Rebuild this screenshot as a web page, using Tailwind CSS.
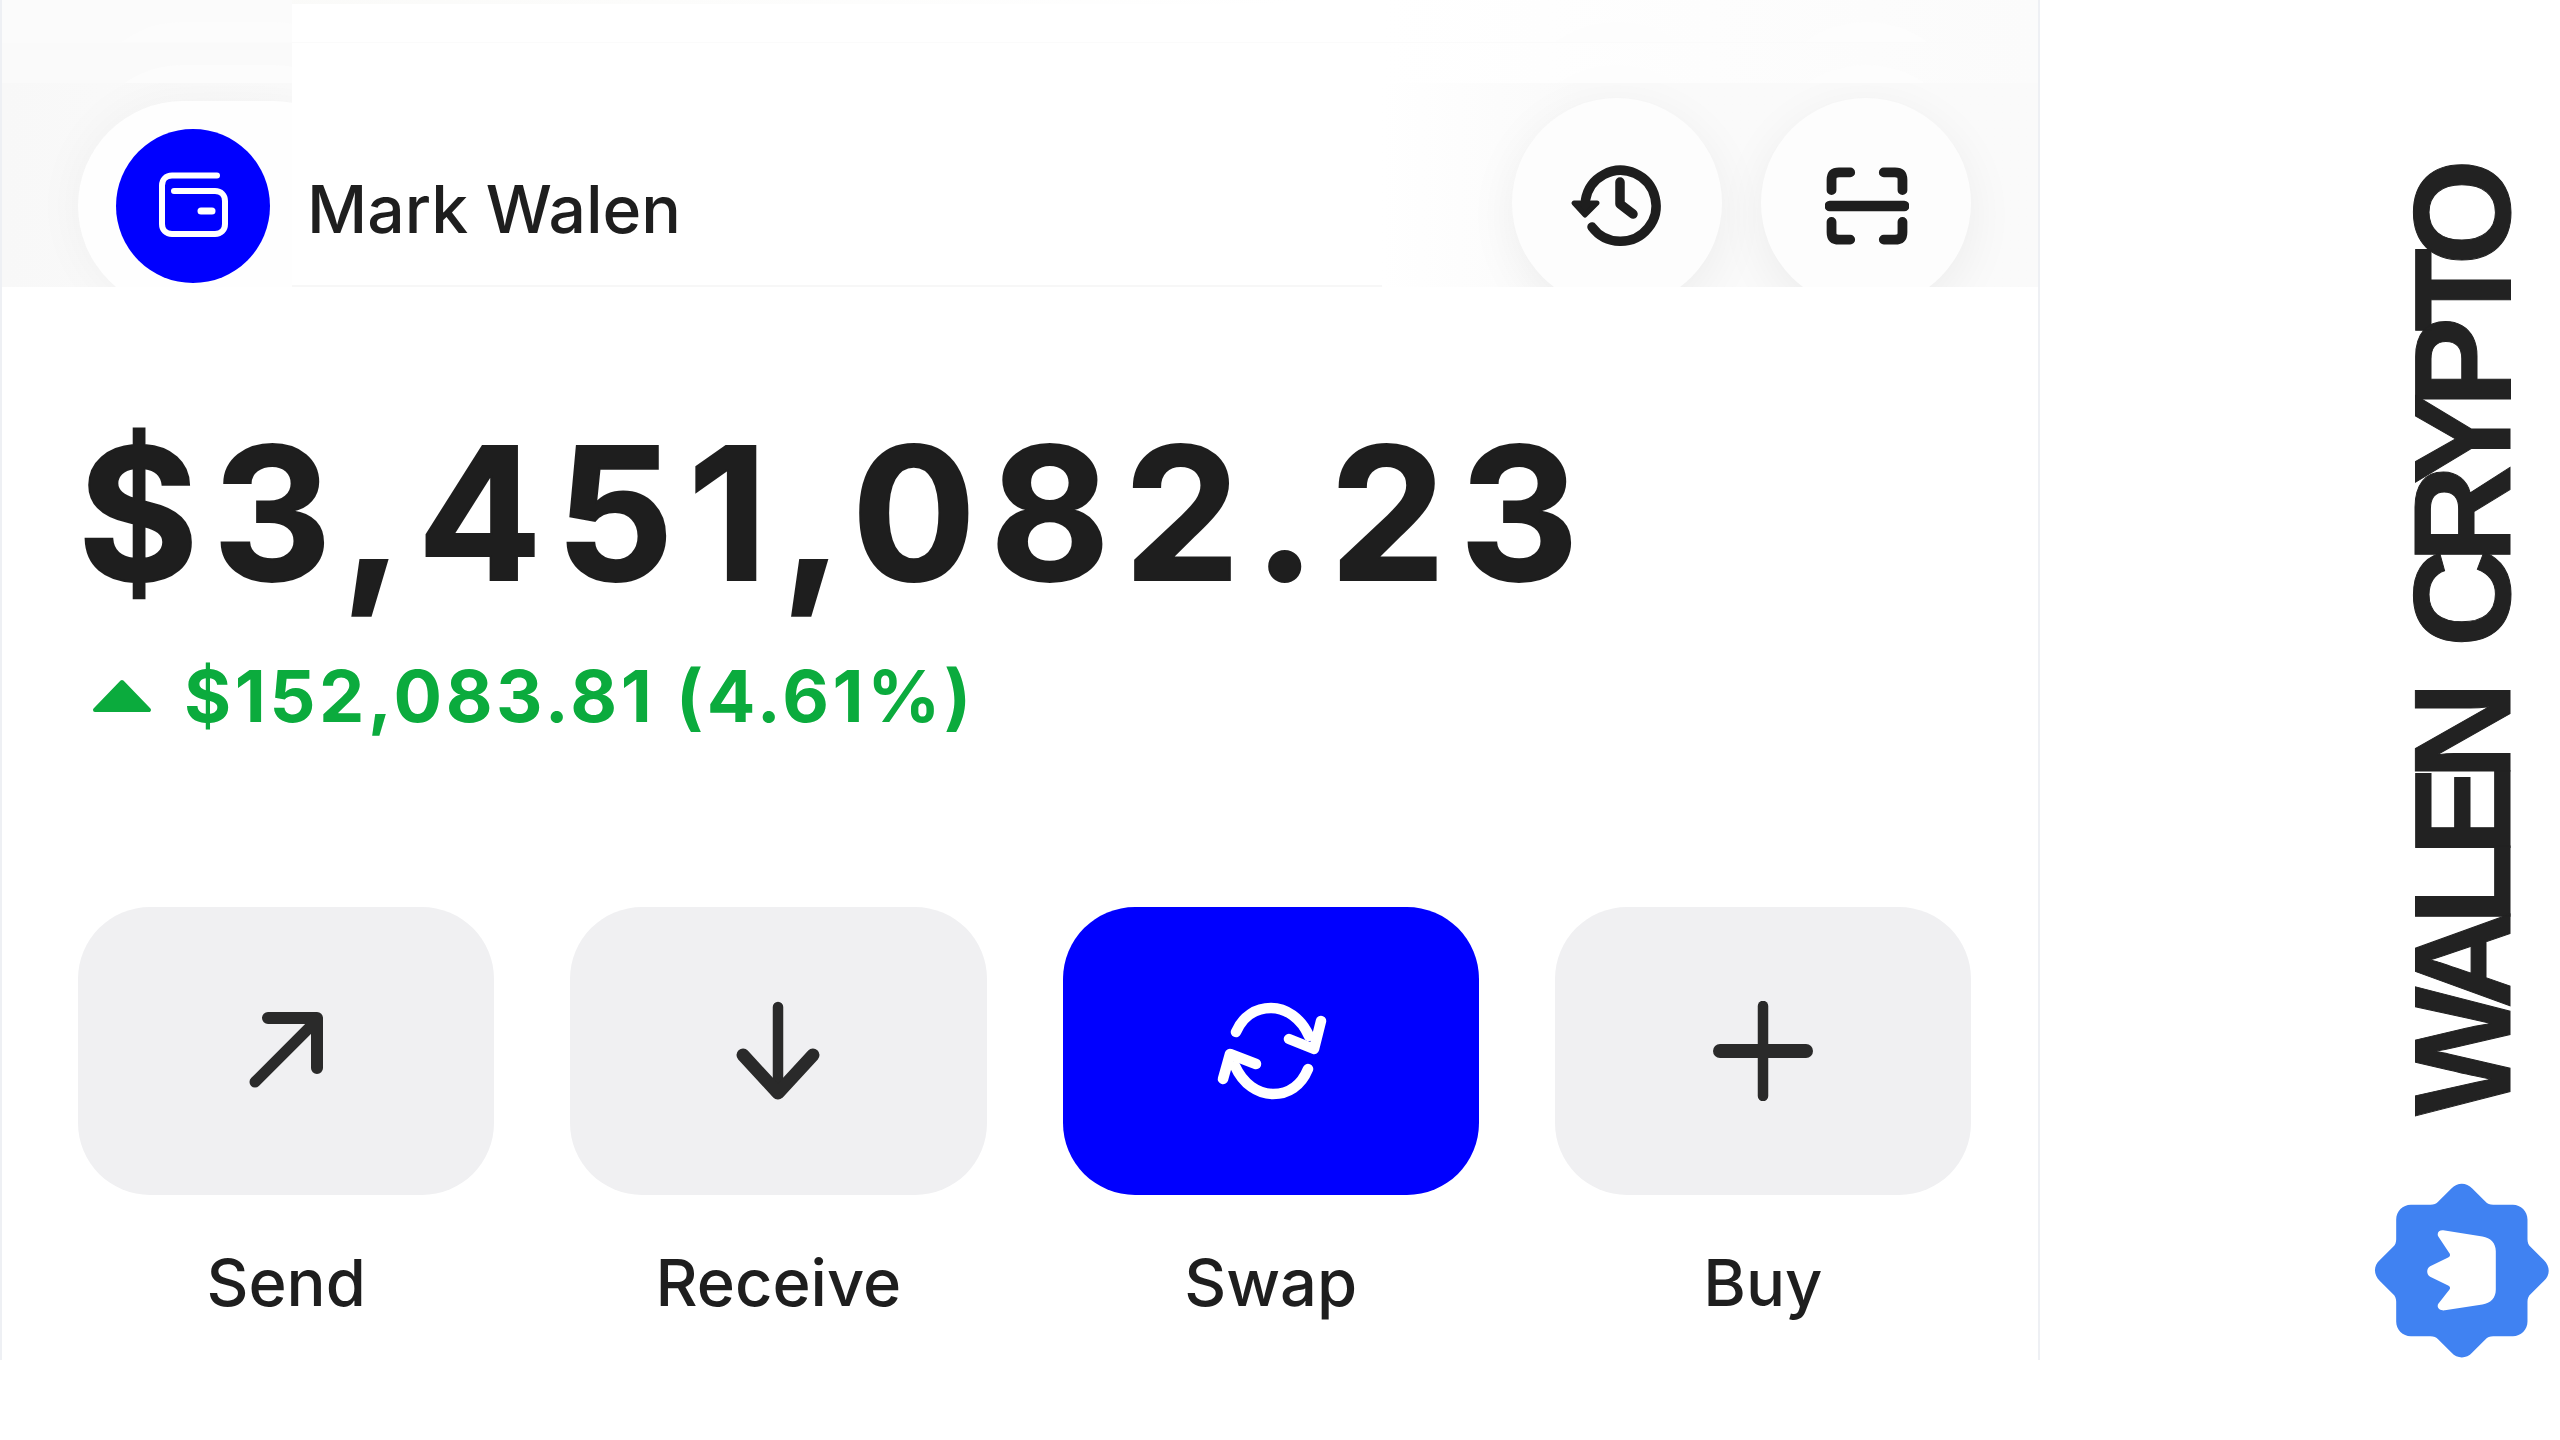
<!doctype html>
<html lang="en">
<head>
<meta charset="utf-8">
<title>Wallet</title>
<script src="https://cdn.jsdelivr.net/npm/@tailwindcss/browser@4"></script>
</head>
<body class="bg-white font-['Inter',sans-serif] text-[#1e1e1e]">
<div class="flex w-[2560px] h-[1440px] overflow-hidden">

  <!-- Wallet card -->
  <main class="w-[2040px] h-[1360px] shrink-0 border-x-2 border-[#eef0f4] bg-white">

    <!-- Top bar with layered frosted strips behind it -->
    <header class="relative h-[287px] border-b-2 border-[#f7f7f7]">
      <div class="absolute inset-0">
        <div class="relative h-[43px] overflow-hidden border-b border-[#fbfbfb]">
          <div class="absolute left-0 top-0 w-[1300px] h-[4px] bg-gradient-to-r from-[#f9f9f7] to-white"></div>
          <div class="absolute left-0 top-0 w-[290px] h-full overflow-hidden bg-[#fbfbfb]"><div class="absolute left-[76px] top-[22px] w-[300px] h-[210px] rounded-full bg-[#fcfcfc]"></div></div>
          <div class="absolute left-[1380px] right-0 top-0 h-full bg-gradient-to-r from-white to-[#fbfbfb]"></div>
          <div class="absolute left-[1510px] top-[22px] size-[210px] rounded-full bg-[#fdfdfd]"></div>
          <div class="absolute left-[1759px] top-[22px] size-[210px] rounded-full bg-[#fdfdfd]"></div>
        </div>
        <div class="relative h-[40px] overflow-hidden">
          <div class="absolute left-0 top-0 w-[290px] h-full overflow-hidden bg-[#fafafa]"><div class="absolute left-[76px] top-[22px] w-[300px] h-[210px] rounded-full bg-[#fcfcfc]"></div></div>
          <div class="absolute left-[1380px] right-0 top-0 h-full bg-gradient-to-r from-white to-[#fbfbfb]"></div>
          <div class="absolute left-[1510px] top-[22px] size-[210px] rounded-full bg-[#fdfdfd]"></div>
          <div class="absolute left-[1759px] top-[22px] size-[210px] rounded-full bg-[#fdfdfd]"></div>
        </div>
        <div class="relative h-[204px] overflow-hidden">
          <div class="absolute left-0 top-0 w-[290px] h-full overflow-hidden bg-gradient-to-r from-[#f8f8f8] to-[#fbfbfb]"><div class="absolute left-[76px] top-[18px] w-[300px] h-[210px] rounded-full bg-[#fefefe] shadow-[0_0_50px_rgba(0,0,0,0.045)]"></div></div>
          <div class="absolute left-[1380px] right-0 top-0 h-full overflow-hidden bg-gradient-to-r from-white via-[#fafafa] via-30% to-[#fafafa]">
            <div class="absolute left-[130px] top-[15px] size-[210px] rounded-full bg-[#fdfdfd] shadow-[0_12px_50px_rgba(0,0,0,0.06)]"></div>
            <div class="absolute left-[379px] top-[15px] size-[210px] rounded-full bg-[#fdfdfd] shadow-[0_12px_50px_rgba(0,0,0,0.06)]"></div>
          </div>
        </div>
      </div>

      <div class="relative flex items-start justify-between pt-[129px] pl-[114px] pr-[66px]">
        <div class="flex items-center gap-[37px]">
          <div class="size-[154px] rounded-full bg-[#0000ff] flex items-center justify-center">
            <svg class="w-[90px] h-[90px] translate-x-[2px] -translate-y-[1px]" viewBox="0 0 90 90" fill="none" stroke="white" stroke-width="6" stroke-linecap="round" stroke-linejoin="round">
              <path d="M67 15.5H22c-6 0-10 4-10 10V64c0 6 4 10 10 10h43c6 0 10-4 10-10V41c0-6-4-10-10-10H24"/>
              <path d="M51 51h11" stroke-width="7"/>
            </svg>
          </div>
          <span class="text-[66px] font-medium leading-none translate-y-[3px]">Mark Walen</span>
        </div>
        <div class="flex gap-[39px] -mt-[28px]">
          <div class="size-[210px] flex items-center justify-center">
            <svg class="w-[120px] h-[110px] translate-x-[1px] -translate-y-[3px]" viewBox="0 0 120 110" fill="none" stroke="#1e1e1e" stroke-width="9.5" stroke-linecap="round" stroke-linejoin="round">
              <path d="M33 79A35.5 35.5 0 1 0 26.5 52"/>
              <path d="M15 55h23L26 67z" fill="#1e1e1e" stroke-width="5"/>
              <path d="M61 34v22l13 10"/>
            </svg>
          </div>
          <div class="size-[210px] flex items-center justify-center">
            <svg class="size-[84px]" viewBox="0 0 90 90" fill="none" stroke="#1e1e1e" stroke-width="10.5" stroke-linecap="round" stroke-linejoin="round">
              <path d="M27 9H15c-6 0-8 3-8 8v11M63 9h12c6 0 8 3 8 8v11M27 81H15c-6 0-8-3-8-8V62M63 81h12c6 0 8-3 8-8V62"/>
              <path d="M5 45h80" stroke-width="11"/>
            </svg>
          </div>
        </div>
      </div>
    </header>

    <!-- Balance -->
    <section class="pl-[76px] font-bold">
      <h1 class="mt-[127px] text-[184px] leading-[198px] tracking-[14.2px] [-webkit-text-stroke:2px_#1e1e1e] whitespace-nowrap">$3,451,082.23</h1>
      <div class="mt-[39px] flex items-center gap-[32px] pl-[14px] text-[#0bab3d]">
        <svg class="w-[60px] h-[34px]" viewBox="0 0 60 34" fill="#0bab3d" stroke="#0bab3d" stroke-width="4" stroke-linejoin="round"><path d="M30 3 57 31H3z"/></svg>
        <span class="text-[72px] leading-[90px] tracking-[3.6px] whitespace-nowrap">$152,083.81 (4.61%)</span>
      </div>
    </section>

    <!-- Quick actions -->
    <section class="mt-[166px] ml-[76px] mr-[67px] grid grid-cols-4 gap-x-[76px] text-center">
      <div>
        <div class="h-[288px] rounded-[72px] bg-[#f0f0f2] flex items-center justify-center">
          <svg class="size-[100px] translate-x-[3px]" viewBox="0 0 100 100" fill="none" stroke="#2a2a2a" stroke-width="11" stroke-linecap="round" stroke-linejoin="round"><path d="M16 81 76 21"/><path d="M29 17h49v50" stroke-width="12"/></svg>
        </div>
        <div class="mt-[48px] text-[65px] font-medium leading-[80px]">Send</div>
      </div>
      <div>
        <div class="h-[288px] rounded-[72px] bg-[#f0f0f2] flex items-center justify-center">
          <svg class="size-[100px]" viewBox="0 0 100 100" fill="none" stroke="#2a2a2a" stroke-width="10.5" stroke-linecap="round" stroke-linejoin="round"><path d="M50 6v86"/><path d="M15 54l35 38 35-38" stroke-width="13"/></svg>
        </div>
        <div class="mt-[48px] text-[65px] font-medium leading-[80px]">Receive</div>
      </div>
      <div>
        <div class="h-[288px] rounded-[72px] bg-[#0000ff] flex items-center justify-center">
          <svg class="w-[140px] h-[120px]" viewBox="0 0 140 120" fill="none" stroke="white" stroke-width="10.5" stroke-linecap="round" stroke-linejoin="round">
            <path d="M35 41C42 25 55 17 70 17c15 0 30 10 38 28"/><path d="M120 30 113 58 88 48"/>
            <path d="M107 78c-7 17-20 25-35 25-15 0-30-10-38-28"/><path d="M22 88 29 63 55 73"/>
          </svg>
        </div>
        <div class="mt-[48px] text-[65px] font-medium leading-[80px]">Swap</div>
      </div>
      <div>
        <div class="h-[288px] rounded-[72px] bg-[#f0f0f2] flex items-center justify-center">
          <svg class="size-[100px]" viewBox="0 0 100 100" fill="none" stroke="#2a2a2a" stroke-linecap="round"><path d="M50 5v90" stroke-width="10.5"/><path d="M7 50h86" stroke-width="14"/></svg>
        </div>
        <div class="mt-[48px] text-[65px] font-medium leading-[80px]">Buy</div>
      </div>
    </section>
  </main>

  <!-- Brand rail -->
  <aside class="flex-1 h-[1360px] flex flex-col items-center pl-[324px] pt-[174px]">
    <div class="[writing-mode:vertical-rl] rotate-180 font-['Liberation_Sans',sans-serif] font-bold text-[137px] leading-[137px] tracking-[-15px] [word-spacing:26px] [-webkit-text-stroke:1px_#222222] whitespace-nowrap text-[#222222]">WALEN CRYPTO</div>
    <svg class="mt-auto size-[178px]" viewBox="100 95 545 545" fill="#4082f2">
      <path d="M340 115c18-20 46-20 64 0l40 40c6 7 14 10 24 10h60c25 0 45 20 45 45v60c0 10 3 18 10 24l40 40c20 20 20 46 0 64l-40 40c-7 6-10 14-10 24v60c0 25-20 45-45 45h-60c-10 0-18 3-24 10l-40 40c-18 20-46 20-64 0l-40-40c-6-7-14-10-24-10h-60c-25 0-45-20-45-45v-60c0-10-3-18-10-24l-40-40c-20-20-20-46 0-64l40-40c7-6 10-14 10-24v-60c0-25 20-45 45-45h60c10 0 18-3 24-10z"/>
      <path fill="white" d="M300 262c-6-12 3-20 15-19l120 19c25 4 41 20 41 45v118c0 25-16 41-41 45l-115 18c-14 2-27-8-20-20l33-42c5-6 3-11-3-14l-55-27c-12-6-12-26 0-32l55-27c6-3 8-8 3-14z"/>
    </svg>
  </aside>
</div>
</body>
</html>
